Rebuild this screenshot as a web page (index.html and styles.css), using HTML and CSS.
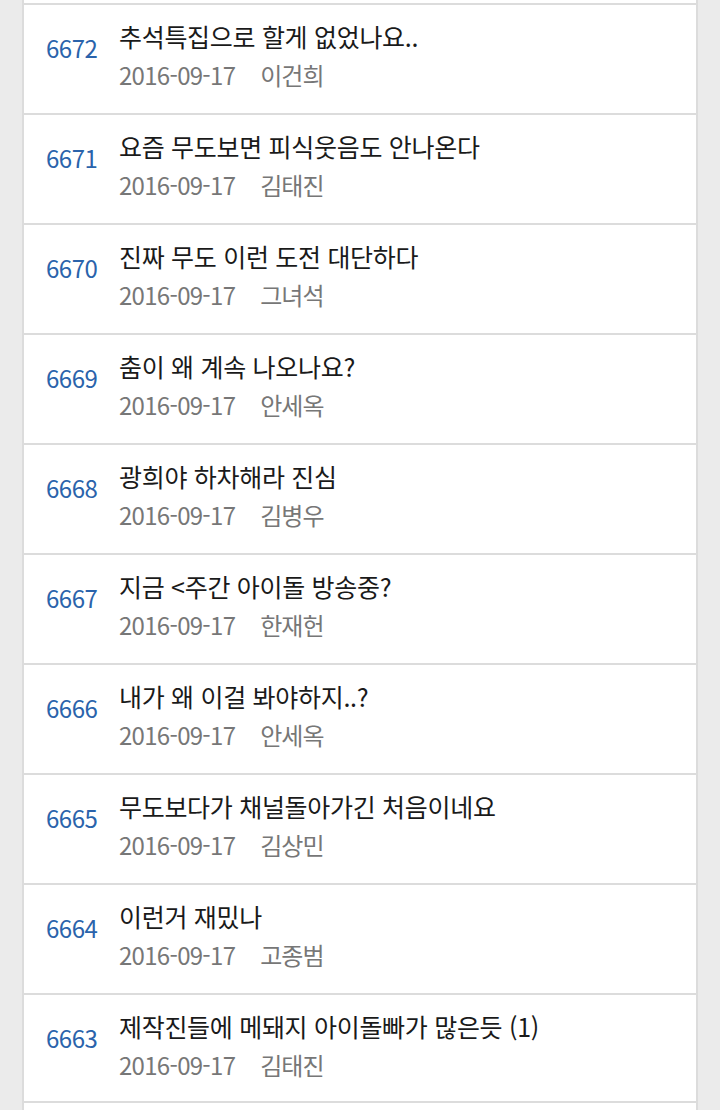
FILE: index.html
```html
<!DOCTYPE html>
<html lang="ko">
<head>
<meta charset="utf-8">
<title>게시판</title>
<link rel="stylesheet" href="styles.css">
</head>
<body>
<ul class="board">
  <li class="row"><span class="num">6672</span><div class="info"><p class="title">추석특집으로 할게 없었나요..</p><p class="meta"><span class="date">2016-09-17</span><span class="author">이건희</span></p></div></li>
  <li class="row"><span class="num">6671</span><div class="info"><p class="title">요즘 무도보면 피식웃음도 안나온다</p><p class="meta"><span class="date">2016-09-17</span><span class="author">김태진</span></p></div></li>
  <li class="row"><span class="num">6670</span><div class="info"><p class="title">진짜 무도 이런 도전 대단하다</p><p class="meta"><span class="date">2016-09-17</span><span class="author">그녀석</span></p></div></li>
  <li class="row"><span class="num">6669</span><div class="info"><p class="title">춤이 왜 계속 나오나요?</p><p class="meta"><span class="date">2016-09-17</span><span class="author">안세옥</span></p></div></li>
  <li class="row"><span class="num">6668</span><div class="info"><p class="title">광희야 하차해라 진심</p><p class="meta"><span class="date">2016-09-17</span><span class="author">김병우</span></p></div></li>
  <li class="row"><span class="num">6667</span><div class="info"><p class="title">지금 &lt;주간 아이돌 방송중?</p><p class="meta"><span class="date">2016-09-17</span><span class="author">한재헌</span></p></div></li>
  <li class="row"><span class="num">6666</span><div class="info"><p class="title">내가 왜 이걸 봐야하지..?</p><p class="meta"><span class="date">2016-09-17</span><span class="author">안세옥</span></p></div></li>
  <li class="row"><span class="num">6665</span><div class="info"><p class="title">무도보다가 채널돌아가긴 처음이네요</p><p class="meta"><span class="date">2016-09-17</span><span class="author">김상민</span></p></div></li>
  <li class="row"><span class="num">6664</span><div class="info"><p class="title">이런거 재밌나</p><p class="meta"><span class="date">2016-09-17</span><span class="author">고종범</span></p></div></li>
  <li class="row"><span class="num">6663</span><div class="info"><p class="title">제작진들에 메돼지 아이돌빠가 많은듯 (1)</p><p class="meta"><span class="date">2016-09-17</span><span class="author">김태진</span></p></div></li>
</ul>
</body>
</html>
```

FILE: styles.css
```css
html, body {
  margin: 0;
  padding: 0;
  background: #ebebeb;
}

body {
  font-family: "Noto Sans CJK KR", "Noto Sans", sans-serif;
}

.board {
  list-style: none;
  margin: 0 22px;
  padding: 3px 0 20px;
  background: #fff;
  border-left: 2px solid #dcdcdc;
  border-right: 2px solid #dcdcdc;
}

.row {
  display: flex;
  align-items: flex-start;
  height: 110px;
  box-sizing: border-box;
  border-top: 2px solid #dcdcdc;
  padding: 0 0 0 22px;
}

.row:last-child {
  border-bottom: 2px solid #dcdcdc;
}

.num {
  width: 73px;
  flex: none;
  margin-top: 26px;
  font-size: 24px;
  line-height: 34px;
  color: #2a63ab;
  letter-spacing: -0.5px;
}

.info {
  padding-top: 14px;
}

.title {
  margin: 0;
  font-size: 25px;
  line-height: 34px;
  color: #1a1a1a;
  letter-spacing: -0.3px;
}

.meta {
  margin: 5px 0 0;
  font-size: 24px;
  line-height: 34px;
  color: #777;
  display: flex;
  gap: 25px;
}

.date {
  letter-spacing: -0.7px;
}

.author {
  letter-spacing: -1px;
}
```
